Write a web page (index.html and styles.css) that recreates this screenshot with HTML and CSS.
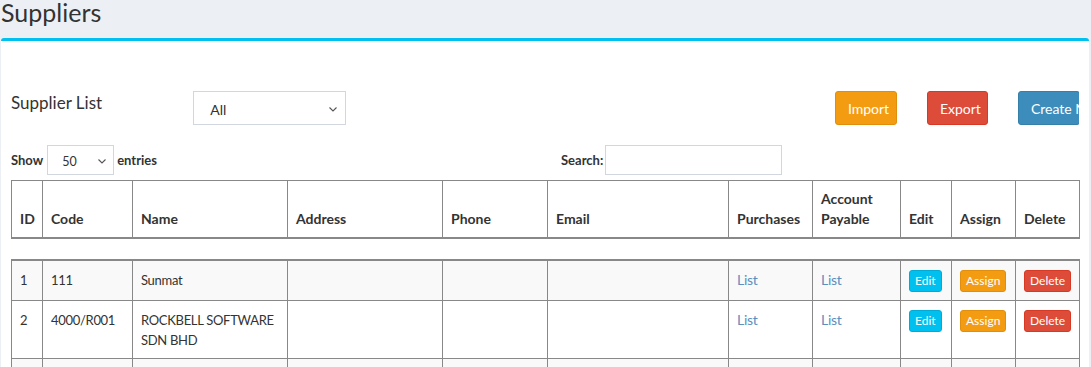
FILE: index.html
```html
<!DOCTYPE html>
<html lang="en">
<head>
    <meta charset="UTF-8">
    <meta name="viewport" content="width=device-width, initial-scale=1.0">
    <title>Suppliers</title>
    <link rel="stylesheet" href="styles.css">
</head>
<body>
    <h1 class="page-title">Suppliers</h1>

    <div class="box">
        <div class="toolbar">
            <div class="box-title">Supplier List</div>
            <div class="fake-select filter">
                <span>All</span>
                <svg width="8" height="5" viewBox="0 0 8 5"><path d="M0.5 0.5 L4 4 L7.5 0.5" fill="none" stroke="#555" stroke-width="1.1"/></svg>
            </div>
            <div class="actions">
                <button class="btn btn-import">Import</button>
                <button class="btn btn-export">Export</button>
                <button class="btn btn-create">Create New</button>
            </div>
        </div>

        <div class="table-controls">
            <div class="length">
                <strong>Show</strong>
                <div class="fake-select small">
                    <span>50</span>
                    <svg width="8" height="5" viewBox="0 0 8 5"><path d="M0.5 0.5 L4 4 L7.5 0.5" fill="none" stroke="#555" stroke-width="1.1"/></svg>
                </div>
                <strong>entries</strong>
            </div>
            <div class="search">
                <strong>Search:</strong>
                <input type="text">
            </div>
        </div>

        <table class="grid head">
            <colgroup>
                <col style="width:31px"><col style="width:90px"><col style="width:155px"><col style="width:155px">
                <col style="width:105px"><col style="width:181px"><col style="width:84px"><col style="width:88px">
                <col style="width:51px"><col style="width:64px"><col style="width:64px">
            </colgroup>
            <thead>
                <tr>
                    <th>ID</th>
                    <th>Code</th>
                    <th>Name</th>
                    <th>Address</th>
                    <th>Phone</th>
                    <th>Email</th>
                    <th>Purchases</th>
                    <th>Account Payable</th>
                    <th>Edit</th>
                    <th>Assign</th>
                    <th>Delete</th>
                </tr>
            </thead>
        </table>

        <table class="grid body">
            <colgroup>
                <col style="width:31px"><col style="width:90px"><col style="width:155px"><col style="width:155px">
                <col style="width:105px"><col style="width:181px"><col style="width:84px"><col style="width:88px">
                <col style="width:51px"><col style="width:64px"><col style="width:64px">
            </colgroup>
            <tbody>
                <tr>
                    <td>1</td>
                    <td>111</td>
                    <td>Sunmat</td>
                    <td></td>
                    <td></td>
                    <td></td>
                    <td><a href="#">List</a></td>
                    <td><a href="#">List</a></td>
                    <td><button class="btn-xs edit">Edit</button></td>
                    <td><button class="btn-xs assign">Assign</button></td>
                    <td><button class="btn-xs delete">Delete</button></td>
                </tr>
                <tr>
                    <td>2</td>
                    <td>4000/R001</td>
                    <td>ROCKBELL SOFTWARE SDN BHD</td>
                    <td></td>
                    <td></td>
                    <td></td>
                    <td><a href="#">List</a></td>
                    <td><a href="#">List</a></td>
                    <td><button class="btn-xs edit">Edit</button></td>
                    <td><button class="btn-xs assign">Assign</button></td>
                    <td><button class="btn-xs delete">Delete</button></td>
                </tr>
                <tr>
                    <td>3</td>
                    <td></td>
                    <td></td>
                    <td></td>
                    <td></td>
                    <td></td>
                    <td><a href="#">List</a></td>
                    <td><a href="#">List</a></td>
                    <td><button class="btn-xs edit">Edit</button></td>
                    <td><button class="btn-xs assign">Assign</button></td>
                    <td><button class="btn-xs delete">Delete</button></td>
                </tr>
            </tbody>
        </table>
    </div>
</body>
</html>
```

FILE: styles.css
```css
body {
    margin: 0;
    background-color: #ecf0f5;
    font-family: Lato, "Liberation Sans", sans-serif;
    font-size: 14px;
    color: #333;
    overflow: hidden;
}

.page-title {
    margin: 0;
    padding: 0 0 0 1px;
    height: 38px;
    font-size: 25px;
    font-weight: normal;
    line-height: 24px;
}

.box {
    margin-left: 1px;
    width: 1068px;
    padding: 0 10px;
    height: 400px;
    background-color: #fff;
    border-top: 3px solid #00c0ef;
    border-radius: 3px 3px 0 0;
}

/* 顶部一行 */
.toolbar {
    display: flex;
    align-items: center;
    padding-top: 50px;
    height: 34px;
}

.box-title {
    width: 183px;
    font-size: 17px;
    margin-top: -12px;
}

.fake-select {
    display: flex;
    align-items: center;
    justify-content: space-between;
    box-sizing: border-box;
    border: 1px solid #d2d6de;
    background-color: #fff;
}

.fake-select.filter {
    width: 153px;
    height: 34px;
    padding: 2px 8px 0 16px;
    font-size: 14px;
}

.actions {
    display: flex;
    margin-left: 489px;
    gap: 30px;
    width: 245px;
    overflow: hidden;
}

.btn {
    flex: none;
    box-sizing: border-box;
    width: 62px;
    height: 34px;
    padding: 0 12px;
    border: 1px solid;
    border-radius: 3px;
    color: #fff;
    font-family: inherit;
    font-size: 14px;
    text-align: left;
    white-space: nowrap;
    overflow: hidden;
}

.btn-import {
    background-color: #f39c12;
    border-color: #e08e0b;
}

.btn-export {
    width: 61px;
    background-color: #dd4b39;
    border-color: #d73925;
}

.btn-create {
    background-color: #3c8dbc;
    border-color: #367fa9;
}

/* show / search */
.table-controls {
    display: flex;
    margin-top: 20px;
    height: 30px;
    font-size: 13px;
}

.length {
    display: flex;
    align-items: center;
    gap: 3px;
    width: 550px;
}

.fake-select.small {
    width: 67px;
    height: 30px;
    padding: 2px 7px 0 14px;
    font-size: 12.5px;
    margin-left: 1px;
}

.search {
    display: flex;
    align-items: center;
    gap: 2px;
}

.search input {
    box-sizing: border-box;
    width: 177px;
    height: 30px;
    border: 1px solid #d2d6de;
    margin: 0;
}

/* 表格 */
.grid {
    table-layout: fixed;
    border-collapse: collapse;
    width: 1068px;
}

.grid.head {
    margin-top: 5px;
}

.grid th,
.grid td {
    border: 1px solid #888;
    padding: 9px 8px 8px;
    line-height: 20px;
    text-align: left;
    vertical-align: top;
}

.grid td {
    font-size: 13px;
    letter-spacing: -0.3px;
}

.grid th {
    padding-top: 8px;
    vertical-align: bottom;
    font-weight: bold;
    border-bottom: 2px solid #888;
    border-top: 1px solid #888;
}

.grid.body {
    margin-top: 20px;
    border-top: 2px solid #888;
}

.grid.body tr:nth-child(odd) {
    background-color: #f9f9f9;
}

.grid a {
    color: #5b8fbf;
    text-decoration: none;
    font-size: 14px;
}

.btn-xs {
    padding: 1px 5px;
    border: 1px solid;
    border-radius: 3px;
    color: #fff;
    font-family: inherit;
    font-size: 12px;
    line-height: 18px;
    letter-spacing: 0;
}

.edit {
    background-color: #00c0ef;
    border-color: #00acd6;
}

.assign {
    background-color: #f39c12;
    border-color: #e08e0b;
}

.delete {
    background-color: #dd4b39;
    border-color: #d73925;
}
```
